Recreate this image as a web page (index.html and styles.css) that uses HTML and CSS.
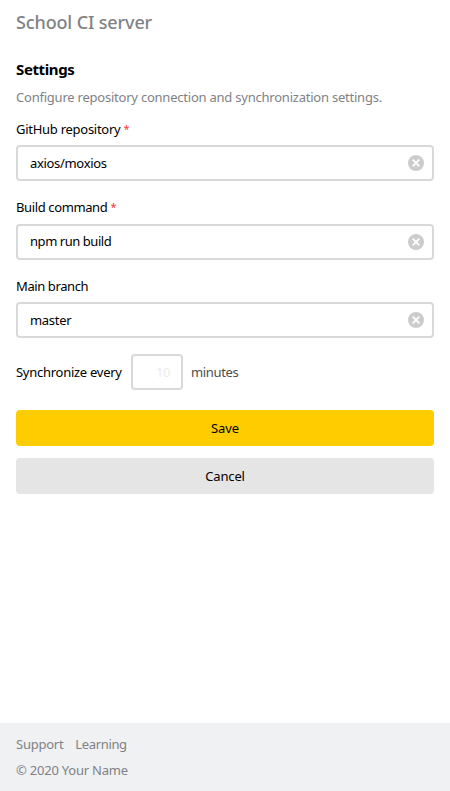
FILE: index.html
```html
<!DOCTYPE html>
<html lang="en">
<head>
<meta charset="utf-8">
<title>School CI server</title>
<link rel="stylesheet" href="styles.css">
</head>
<body>
<header class="header"><span class="header-title">School CI server</span></header>
<main class="main">
  <h1 class="title"><span>Settings</span></h1>
  <p class="description"><span>Configure repository connection and synchronization settings.</span></p>
  <form class="form">
    <div class="field">
      <div class="label"><span class="label-repo">GitHub repository</span><span class="required">*</span></div>
      <div class="input"><span class="value value-repo">axios/moxios</span>
        <svg class="clear" viewBox="0 0 16 16"><circle cx="8" cy="8" r="8" fill="#ccc"/><path d="M4.7 4.7l6.6 6.6M11.3 4.7l-6.6 6.6" stroke="#fff" stroke-width="1.8"/></svg>
      </div>
    </div>
    <div class="field">
      <div class="label label-raised"><span class="label-build">Build command</span><span class="required">*</span></div>
      <div class="input"><span class="value value-build">npm run build</span>
        <svg class="clear" viewBox="0 0 16 16"><circle cx="8" cy="8" r="8" fill="#ccc"/><path d="M4.7 4.7l6.6 6.6M11.3 4.7l-6.6 6.6" stroke="#fff" stroke-width="1.8"/></svg>
      </div>
    </div>
    <div class="field">
      <div class="label"><span class="label-branch">Main branch</span></div>
      <div class="input"><span class="value value-branch">master</span>
        <svg class="clear" viewBox="0 0 16 16"><circle cx="8" cy="8" r="8" fill="#ccc"/><path d="M4.7 4.7l6.6 6.6M11.3 4.7l-6.6 6.6" stroke="#fff" stroke-width="1.8"/></svg>
      </div>
    </div>
    <div class="sync">
      <div class="sync-label"><span class="sync-text">Synchronize every</span></div>
      <div class="input input-small"><span class="placeholder">10</span></div>
      <span class="minutes">minutes</span>
    </div>
    <div class="button button-save"><span>Save</span></div>
    <div class="button button-cancel"><span>Cancel</span></div>
  </form>
</main>
<footer class="footer">
  <div class="links"><span class="support">Support</span><span class="learning">Learning</span></div>
  <div class="copyright"><span>© 2020 Your Name</span></div>
</footer>
</body>
</html>
```
FILE: styles.css
```css
* {
  box-sizing: border-box;
}

body {
  display: flex;
  flex-direction: column;
  height: 791px;
  margin: 0;
  background: #fff;
  color: #000;
  font: 13px/20px "Noto Sans", sans-serif;
  letter-spacing: -0.15px;
  white-space: nowrap;
}

.header {
  padding: 10px 16px 0;
  color: #7f8285;
  font-size: 18px;
  font-weight: 500;
  line-height: 24px;
  letter-spacing: -0.13px;
}

.main {
  flex: 1;
  padding: 25px 16px 0;
}

.title {
  margin: 0;
  font-size: 15px;
  font-weight: 700;
  line-height: 20px;
  letter-spacing: -0.38px;
}

.description {
  margin: 8px 0 0;
  color: #7f8285;
  letter-spacing: -0.225px;
}

.form {
  margin-top: 12px;
}

.field {
  display: flow-root;
  height: 78.5px;
}

.label {
  display: flex;
  gap: 3px;
  height: 26px;
}

.label-raised {
  height: 27px;
  margin-top: -1px;
}

.label-repo {
  letter-spacing: -0.27px;
}

.label-build {
  letter-spacing: -0.38px;
}

.label-branch {
  letter-spacing: -0.4px;
}

.required {
  color: #f33;
  font-size: 11px;
}

.input {
  display: flex;
  align-items: center;
  justify-content: space-between;
  height: 36px;
  padding: 0 8px 0 12px;
  border: 2px solid #d9d9d9;
  border-radius: 4px;
}

.value-repo {
  letter-spacing: -0.32px;
}

.value-build {
  margin-top: -1px;
  letter-spacing: -0.45px;
}

.value-branch {
  letter-spacing: -0.3px;
}

.clear {
  width: 16px;
  height: 16px;
}

.sync {
  display: flex;
  align-items: center;
  margin-top: -1px;
  margin-bottom: 20px;
}

.sync-label {
  width: 115px;
}

.sync-text {
  letter-spacing: -0.27px;
}

.input-small {
  justify-content: flex-end;
  width: 52px;
  padding: 0 11px;
}

.placeholder {
  color: #ebebeb;
  letter-spacing: -0.4px;
}

.minutes {
  margin-left: 8px;
  color: #4d4d4d;
  letter-spacing: -0.35px;
}

.button {
  display: flex;
  align-items: center;
  justify-content: center;
  height: 36px;
  margin-bottom: 12px;
  border-radius: 4px;
}

.button-save {
  background: #fc0;
}

.button-cancel {
  background: #e5e5e5;
}

.footer {
  height: 68px;
  padding: 11px 16px 0;
  background: #f0f1f3;
  color: #7f8285;
}

.links {
  display: flex;
  gap: 12px;
}

.support {
  letter-spacing: -0.25px;
}

.learning {
  letter-spacing: -0.35px;
}

.copyright {
  margin-top: 6px;
  letter-spacing: -0.22px;
}
```
